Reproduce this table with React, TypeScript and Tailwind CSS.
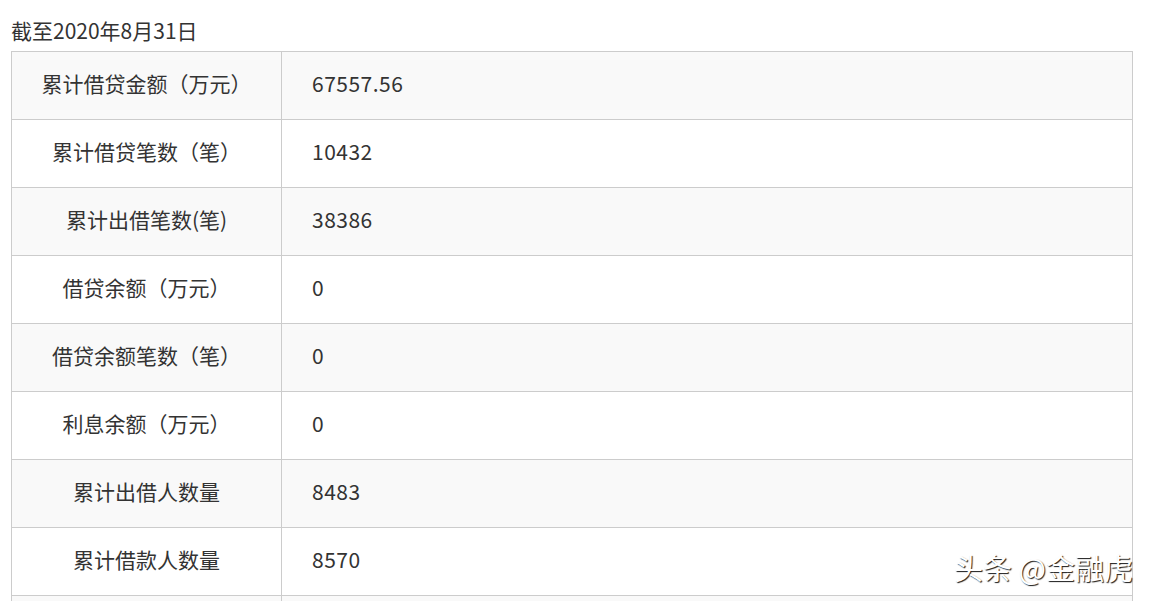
import React from "react";

const rows: [string, string][] = [
  ["累计借贷金额（万元）", "67557.56"],
  ["累计借贷笔数（笔）", "10432"],
  ["累计出借笔数(笔)", "38386"],
  ["借贷余额（万元）", "0"],
  ["借贷余额笔数（笔）", "0"],
  ["利息余额（万元）", "0"],
  ["累计出借人数量", "8483"],
  ["累计借款人数量", "8570"],
  ["", ""],
];

export default function App() {
  return (
    <div
      className="relative h-[601px] overflow-hidden bg-white text-[#333333]"
      style={{ fontFamily: '"Noto Sans CJK SC", "Noto Sans", sans-serif' }}
    >
      <div className="pl-[11px] pt-[10px] pb-[1px] text-[21px] leading-[40px]">截至2020年8月31日</div>
      <div className="ml-[11px] w-[1122px] border-l border-r border-t border-[#cccccc]">
        {rows.map(([k, v], i) => (
          <div
            key={i}
            className={`flex h-[68px] border-b border-[#cccccc] ${i % 2 === 0 ? "bg-[#f9f9f9]" : "bg-white"}`}
          >
            <div className="flex w-[270px] items-center justify-center border-r border-[#cccccc] pb-[3px] text-[21px]">
              {k}
            </div>
            <div className="flex flex-1 items-center pb-[3px] pl-[30px] text-[21px] tracking-[0.5px]">{v}</div>
          </div>
        ))}
      </div>
      <div className="absolute left-[954px] top-[547px] text-[29px] leading-[40px] text-white [text-shadow:1px_1px_1px_rgba(0,0,0,0.9)]">
        头条 @金融虎
      </div>
    </div>
  );
}
